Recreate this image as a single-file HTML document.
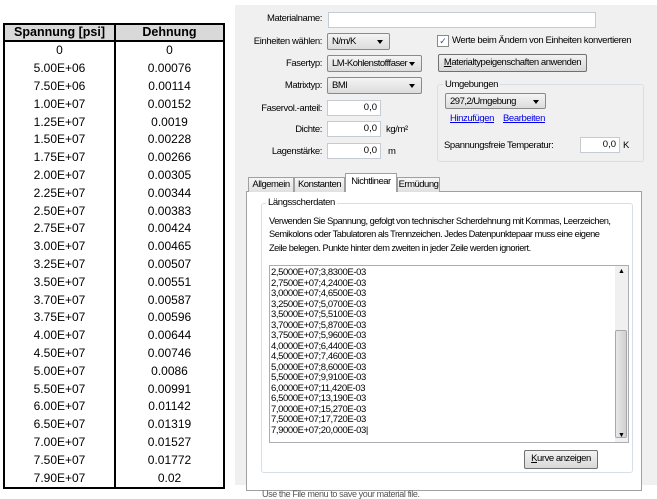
<!DOCTYPE html>
<html><head><meta charset="utf-8"><style>
body{margin:0;width:657px;height:492px;background:#fff;position:relative;overflow:hidden;font-family:"Liberation Sans",sans-serif}
.a{position:absolute}
table{position:absolute;left:3px;top:23px;border-collapse:collapse;width:222px;font-size:12px}
td,th{border-left:2px solid #000;border-right:2px solid #000;height:17.8px;padding:0;text-align:center;line-height:17px}
th{background:#d9d9d9;border:2px solid #000;font-weight:bold;font-size:12.5px;height:15px;line-height:15px}
td:first-child{width:109px}
tr:last-child td{border-bottom:2px solid #000}
.p{font-size:9.5px;color:#000;letter-spacing:-0.4px;white-space:nowrap}
.lbl{position:absolute;font-size:9.5px;text-align:right;letter-spacing:-0.4px;white-space:nowrap}
.in{position:absolute;background:#fff;border:1px solid #c5cbd3;box-sizing:border-box;font-size:9.5px;text-align:right;padding-right:3px;line-height:14px}
.sel{position:absolute;border:1px solid #8a8a8a;border-radius:2px;background:linear-gradient(#f4f4f4,#dcdcdc);box-sizing:border-box;font-size:9.5px;padding-left:4px;line-height:15px;letter-spacing:-0.5px;white-space:nowrap;overflow:hidden}
.sel:after{content:"";position:absolute;right:6px;top:6px;border:3.5px solid transparent;border-top:4px solid #000}
.btn{position:absolute;border:1px solid #707070;border-radius:2px;background:linear-gradient(#f2f2f2,#d8d8d8);box-sizing:border-box;font-size:9.5px;text-align:center;line-height:16px;letter-spacing:-0.45px;white-space:nowrap}
.tab{position:absolute;border:1px solid #a0a0a0;border-bottom:none;background:linear-gradient(#f6f6f6,#e0e0e0);font-size:9.5px;text-align:center;box-sizing:border-box;line-height:14px;letter-spacing:-0.5px;white-space:nowrap}
a{color:#0000ee;text-decoration:underline}
</style></head><body>
<table>
<tr><th>Spannung [psi]</th><th>Dehnung</th></tr>
<tr><td>0</td><td>0</td></tr>
<tr><td>5.00E+06</td><td>0.00076</td></tr>
<tr><td>7.50E+06</td><td>0.00114</td></tr>
<tr><td>1.00E+07</td><td>0.00152</td></tr>
<tr><td>1.25E+07</td><td>0.0019</td></tr>
<tr><td>1.50E+07</td><td>0.00228</td></tr>
<tr><td>1.75E+07</td><td>0.00266</td></tr>
<tr><td>2.00E+07</td><td>0.00305</td></tr>
<tr><td>2.25E+07</td><td>0.00344</td></tr>
<tr><td>2.50E+07</td><td>0.00383</td></tr>
<tr><td>2.75E+07</td><td>0.00424</td></tr>
<tr><td>3.00E+07</td><td>0.00465</td></tr>
<tr><td>3.25E+07</td><td>0.00507</td></tr>
<tr><td>3.50E+07</td><td>0.00551</td></tr>
<tr><td>3.70E+07</td><td>0.00587</td></tr>
<tr><td>3.75E+07</td><td>0.00596</td></tr>
<tr><td>4.00E+07</td><td>0.00644</td></tr>
<tr><td>4.50E+07</td><td>0.00746</td></tr>
<tr><td>5.00E+07</td><td>0.0086</td></tr>
<tr><td>5.50E+07</td><td>0.00991</td></tr>
<tr><td>6.00E+07</td><td>0.01142</td></tr>
<tr><td>6.50E+07</td><td>0.01319</td></tr>
<tr><td>7.00E+07</td><td>0.01527</td></tr>
<tr><td>7.50E+07</td><td>0.01772</td></tr>
<tr><td>7.90E+07</td><td>0.02</td></tr>
</table>

<div class="a" style="left:235px;top:5px;width:422px;height:480px;background:#f0f0f0"></div>
<div class="lbl" style="left:240px;width:82px;top:13px">Materialname:</div>
<div class="in" style="left:328px;top:12px;width:268px;height:16px"></div>
<div class="lbl" style="left:240px;width:82px;top:36px">Einheiten wählen:</div>
<div class="sel" style="left:327px;top:33px;width:63px;height:17px">N/m/K</div>
<div class="a" style="left:437px;top:35px;width:10px;height:10px;border:1px solid #8a8a8a;background:#fff;font-size:9px;line-height:10px;text-align:center;color:#2a4fa0">✓</div>
<div class="p a" style="left:452px;top:35px">Werte beim Ändern von Einheiten konvertieren</div>
<div class="lbl" style="left:240px;width:82px;top:58px">Fasertyp:</div>
<div class="sel" style="left:327px;top:55px;width:95px;height:17px;padding-right:14px">LM-Kohlenstofffaser</div>
<div class="btn" style="left:438px;top:54px;width:149px;height:18px"><u>M</u>aterialtypeigenschaften anwenden</div>
<div class="lbl" style="left:240px;width:82px;top:80px">Matrixtyp:</div>
<div class="sel" style="left:327px;top:77px;width:95px;height:17px">BMI</div>
<div class="a" style="left:437px;top:84px;width:205px;height:76px;border:1px solid #d5dfe5;border-radius:3px"></div>
<div class="p a" style="left:443px;top:79px;background:#f0f0f0;padding:0 2px">Umgebungen</div>
<div class="sel" style="left:445px;top:93px;width:101px;height:16px">297,2/Umgebung</div>
<div class="p a" style="left:450px;top:113px"><a>Hinzufügen</a></div>
<div class="p a" style="left:503px;top:113px"><a>Bearbeiten</a></div>
<div class="p a" style="left:444px;top:140px">Spannungsfreie Temperatur:</div>
<div class="in" style="left:580px;top:137px;width:40px;height:16px">0,0</div>
<div class="p a" style="left:623px;top:140px">K</div>
<div class="lbl" style="left:240px;width:82px;top:103px">Faservol.-anteil:</div>
<div class="in" style="left:327px;top:100px;width:54px;height:16px">0,0</div>
<div class="lbl" style="left:240px;width:82px;top:124px">Dichte:</div>
<div class="in" style="left:327px;top:121px;width:54px;height:16px">0,0</div>
<div class="p a" style="left:386px;top:124px">kg/m²</div>
<div class="lbl" style="left:240px;width:82px;top:146px">Lagenstärke:</div>
<div class="in" style="left:327px;top:143px;width:54px;height:16px">0,0</div>
<div class="p a" style="left:388px;top:146px">m</div>

<div class="a" style="left:246px;top:191px;width:396px;height:300px;background:#fff;border:1px solid #a0a0a0;box-sizing:border-box"></div>
<div class="tab" style="left:248px;top:177px;width:46px;height:15px">Allgemein</div>
<div class="tab" style="left:294px;top:177px;width:51px;height:15px">Konstanten</div>
<div class="tab" style="left:397px;top:177px;width:43px;height:15px">Ermüdung</div>
<div class="tab" style="left:345px;top:173px;width:52px;height:19px;background:#fff;line-height:16px">Nichtlinear</div>
<div class="a" style="left:261px;top:203px;width:372px;height:270px;border:1px solid #d5dfe5;border-radius:3px;box-sizing:border-box"></div>
<div class="p a" style="left:266px;top:197px;background:#fff;padding:0 2px">Längsscherdaten</div>
<div class="p a" style="left:269px;top:215px;line-height:13.3px;font-size:9.3px;letter-spacing:-0.5px">Verwenden Sie Spannung, gefolgt von technischer Scherdehnung mit Kommas, Leerzeichen,<br>Semikolons oder Tabulatoren als Trennzeichen. Jedes Datenpunktepaar muss eine eigene<br>Zeile belegen. Punkte hinter dem zweiten in jeder Zeile werden ignoriert.</div>
<div class="a" style="left:269px;top:265px;width:360px;height:178px;border:1px solid #abadb3;box-sizing:border-box;background:#fff"></div>
<div class="a" style="left:615px;top:266px;width:13px;height:176px;background:#f0f0f0"></div>
<div class="a" style="left:615px;top:330px;width:12px;height:108px;background:linear-gradient(90deg,#e8e8e8,#d0d0d0);border:1px solid #a8a8a8;border-radius:2px;box-sizing:border-box"></div>
<div class="a" style="left:618px;top:268px;font-size:7px">▲</div>
<div class="a" style="left:618px;top:432px;font-size:7px">▼</div>
<div class="p a" style="left:271px;top:268px;line-height:10.5px;font-size:9.5px;letter-spacing:-0.4px">2,5000E+07;3,8300E-03<br>2,7500E+07;4,2400E-03<br>3,0000E+07;4,6500E-03<br>3,2500E+07;5,0700E-03<br>3,5000E+07;5,5100E-03<br>3,7000E+07;5,8700E-03<br>3,7500E+07;5,9600E-03<br>4,0000E+07;6,4400E-03<br>4,5000E+07;7,4600E-03<br>5,0000E+07;8,6000E-03<br>5,5000E+07;9,9100E-03<br>6,0000E+07;11,420E-03<br>6,5000E+07;13,190E-03<br>7,0000E+07;15,270E-03<br>7,5000E+07;17,720E-03<br>7,9000E+07;20,000E-03|</div>
<div class="btn" style="left:524px;top:450px;width:74px;height:19px"><u>K</u>urve anzeigen</div>
<div class="p a" style="left:262px;top:489px;color:#555;font-size:9px">Use the File menu to save your material file.</div>
</body></html>
